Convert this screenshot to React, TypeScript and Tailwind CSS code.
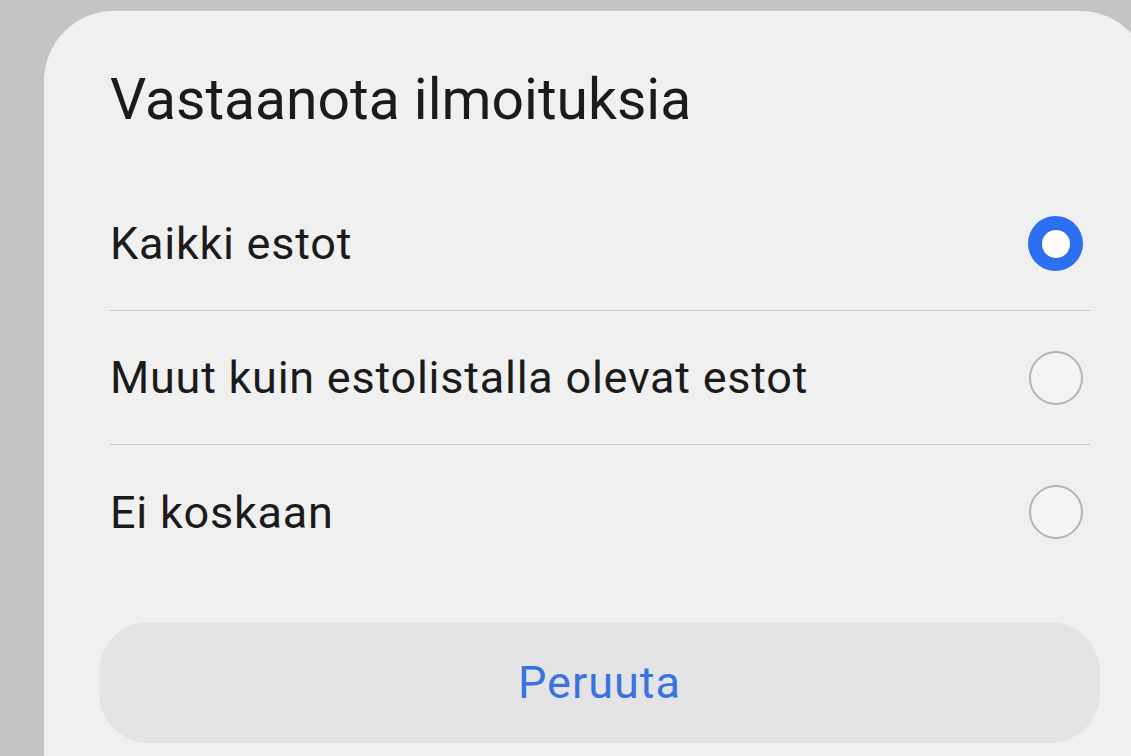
import { useState } from 'react';

const options = ['Kaikki estot', 'Muut kuin estolistalla olevat estot', 'Ei koskaan'];

function Radio({ checked }: { checked: boolean }) {
  if (checked) {
    return (
      <span className="flex items-center justify-center w-[55px] h-[55px] rounded-full bg-[#2c6ff3]">
        <span className="w-[28px] h-[28px] rounded-full bg-white" />
      </span>
    );
  }
  return <span className="block w-[54px] h-[54px] rounded-full border-2 border-[#b4b4b4] bg-[#f4f4f4]" />;
}

export default function App() {
  const [selected, setSelected] = useState(0);

  return (
    <div
      className="w-[1131px] h-[756px] overflow-hidden bg-[#c4c4c6] pt-[11px] pl-[44px]"
      style={{ fontFamily: 'Roboto, "Noto Sans", sans-serif' }}
    >
      <div className="w-[1106px] h-[800px] rounded-t-[70px] bg-[#f0f0f0] pt-[52px]">
        {/* Title */}
        <h1 className="pl-[66px] text-[57px] leading-[74px] text-[#1b1b1b] font-normal">
          Vastaanota ilmoituksia
        </h1>

        {/* Options */}
        <div className="mt-[40px] ml-[66px] w-[980px]">
          {options.map((label, i) => (
            <button
              key={label}
              onClick={() => setSelected(i)}
              className={`flex w-full h-[134px] items-center justify-between pr-[7px] text-left ${
                i < options.length - 1 ? 'border-b border-[#c6c6c6]' : ''
              }`}
            >
              <span className="text-[45px] tracking-[0.75px] text-[#1b1b1b] leading-none">{label}</span>
              <Radio checked={selected === i} />
            </button>
          ))}
        </div>

        {/* Cancel */}
        <button className="mt-[43px] ml-[55px] w-[1001px] h-[121px] rounded-[50px] bg-[#e4e4e6] flex items-center justify-center">
          <span className="text-[45px] tracking-[1px] text-[#3a72e2] leading-none">Peruuta</span>
        </button>
      </div>
    </div>
  );
}
